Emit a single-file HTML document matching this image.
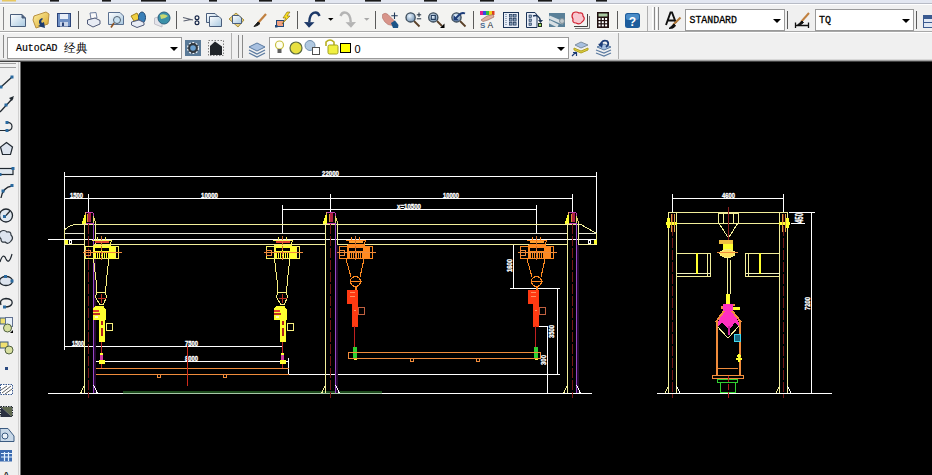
<!DOCTYPE html>
<html><head><meta charset="utf-8">
<style>
html,body{margin:0;padding:0;width:932px;height:475px;overflow:hidden;background:#f0f0f0;font-family:"Liberation Sans",sans-serif;}
#root{position:relative;width:932px;height:475px;}
svg{position:absolute;left:0;top:0;}
</style></head><body><div id="root">
<svg width="932" height="475" viewBox="0 0 932 475">
<!-- ===== toolbar chrome ===== -->
<rect x="0" y="0" width="932" height="62" fill="#f0f0f0"/>
<rect x="0" y="0" width="932" height="3" fill="#e3e7f1"/>
<rect x="2" y="0" width="14" height="1.5" fill="#e8c860"/>
<rect x="50" y="0" width="9" height="1.6" fill="#1a1a1a"/>
<rect x="102" y="0" width="9" height="1.6" fill="#1a1a1a"/>
<rect x="141" y="0" width="25" height="1.6" fill="#1a1a1a"/>
<rect x="209" y="0" width="8" height="1.6" fill="#1a1a1a"/>
<rect x="259" y="0" width="13" height="1.6" fill="#1a1a1a"/>
<rect x="315" y="0" width="10" height="1.6" fill="#1a1a1a"/>
<rect x="365" y="0" width="16" height="1.6" fill="#1a1a1a"/>
<rect x="424" y="0" width="13" height="1.6" fill="#1a1a1a"/>
<rect x="480" y="0" width="14" height="1.6" fill="#1a1a1a"/>
<rect x="538" y="0" width="14" height="1.6" fill="#1a1a1a"/>
<rect x="596" y="0" width="11" height="1.6" fill="#1a1a1a"/>
<line x1="0" y1="3.5" x2="932" y2="3.5" stroke="#b8bcc6"/>
<line x1="0" y1="4.5" x2="932" y2="4.5" stroke="#ffffff"/>
<!-- row1 toolbar -->
<rect x="0" y="5" width="648" height="26" fill="#f3f3f1"/>
<line x1="0" y1="31.5" x2="932" y2="31.5" stroke="#a8a8a8"/>
<line x1="647.5" y1="6" x2="647.5" y2="31" stroke="#b0b0b0"/>
<line x1="3.5" y1="7" x2="3.5" y2="30" stroke="#8a8a8a"/>
<!-- row2 -->
<line x1="0" y1="32.5" x2="932" y2="32.5" stroke="#ffffff"/>
<rect x="0" y="33" width="932" height="26" fill="#f0f0f0"/>
<line x1="231.5" y1="33" x2="231.5" y2="59" stroke="#b0b0b0"/>
<line x1="618.5" y1="33" x2="618.5" y2="59" stroke="#b0b0b0"/>
<line x1="3.5" y1="35" x2="3.5" y2="58" stroke="#8a8a8a"/>
<line x1="0" y1="59.5" x2="932" y2="59.5" stroke="#d8d8d8"/>
<line x1="0" y1="60.5" x2="932" y2="60.5" stroke="#a0a0a0"/>
<line x1="0" y1="61.5" x2="932" y2="61.5" stroke="#404040"/>
<!-- combos -->
<rect x="7.5" y="37.5" width="174" height="21" fill="#fff" stroke="#9a9a9a"/>
<rect x="269.5" y="37.5" width="299" height="21" fill="#fff" stroke="#9a9a9a"/>
<rect x="685.5" y="9.5" width="99" height="21" fill="#fff" stroke="#9a9a9a"/>
<rect x="815.5" y="9.5" width="98" height="21" fill="#fff" stroke="#9a9a9a"/>
<!-- ===== left toolbar ===== -->
<rect x="0" y="62" width="21" height="413" fill="#f0f0f0"/>
<line x1="0" y1="63.5" x2="16" y2="63.5" stroke="#a0a0a0"/>
<line x1="0" y1="67.5" x2="16" y2="67.5" stroke="#a0a0a0"/>
<line x1="18.5" y1="62" x2="18.5" y2="475" stroke="#d0d0d0"/>
<line x1="20.5" y1="62" x2="20.5" y2="475" stroke="#707070"/>
<!--ICONS-->
<line x1="78.5" y1="11" x2="78.5" y2="29" stroke="#5a5a5a"/>
<line x1="176.5" y1="11" x2="176.5" y2="29" stroke="#5a5a5a"/>
<line x1="297.5" y1="11" x2="297.5" y2="29" stroke="#5a5a5a"/>
<line x1="375.5" y1="11" x2="375.5" y2="29" stroke="#5a5a5a"/>
<line x1="473.5" y1="11" x2="473.5" y2="29" stroke="#5a5a5a"/>
<line x1="617.5" y1="11" x2="617.5" y2="29" stroke="#5a5a5a"/>
<line x1="787.5" y1="11" x2="787.5" y2="29" stroke="#5a5a5a"/>
<line x1="916.5" y1="11" x2="916.5" y2="29" stroke="#5a5a5a"/>
<line x1="652.5" y1="7" x2="652.5" y2="30" stroke="#ffffff"/>
<line x1="654.5" y1="7" x2="654.5" y2="30" stroke="#8a8a8a"/>
<line x1="656.5" y1="7" x2="656.5" y2="30" stroke="#ffffff"/>
<line x1="658.5" y1="7" x2="658.5" y2="30" stroke="#8a8a8a"/>
<defs><linearGradient id="pg" x1="0" y1="0" x2="1" y2="1"><stop offset="0" stop-color="#ffffff"/><stop offset="1" stop-color="#a8c8e0"/></linearGradient><linearGradient id="yg" x1="0" y1="0" x2="1" y2="1"><stop offset="0" stop-color="#fff0a0"/><stop offset="1" stop-color="#d8a830"/></linearGradient><radialGradient id="bg1" cx="0.4" cy="0.35" r="0.7"><stop offset="0" stop-color="#e8f4ff"/><stop offset="1" stop-color="#7090b0"/></radialGradient></defs>
<path d="M10.5 14.5 H22 L25.5 18 V26.5 H10.5 Z" fill="url(#pg)" stroke="#4a5e7c"/>
<path d="M22 14.5 V18 H25.5" fill="#4a5e7c" stroke="#4a5e7c"/>
<path d="M34 16 L46 12 L49 14 L48 24 L36 28 L33 20 Z" fill="url(#yg)" stroke="#b89040"/>
<path d="M42 18 Q37 20 40 25 L38 26 L45 28 L44 22 L42 23 Q40 21 43 19 Z" fill="#1c3c70"/>
<rect x="57.5" y="13.5" width="13" height="13" fill="#6f90c4" stroke="#2c4478"/>
<rect x="60" y="14" width="8" height="5" fill="#e8eef8"/>
<rect x="60" y="22" width="8" height="4.5" fill="#c8d4e8"/><rect x="62" y="22.5" width="2" height="3.5" fill="#2c4478"/>
<path d="M90 13 L96 12.5 L97 18 L91 19 Z" fill="#fafafa" stroke="#7080a0"/>
<path d="M87.5 20 L95 18 L100 20.5 L100 24 L93 27 L87.5 24 Z" fill="#e8ecf4" stroke="#505a78"/>
<path d="M108.5 12.5 H120 L123.5 16 V24.5 H108.5 Z" fill="url(#pg)" stroke="#5a7090"/>
<circle cx="117" cy="20" r="3.5" fill="#c8e0f0" stroke="#506070"/>
<line x1="114" y1="23" x2="111" y2="27.5" stroke="#8a5020" stroke-width="1.6"/>
<path d="M131 16 L137 13 L140 19 L134 21 Z" fill="#f0d040" stroke="#a08020"/>
<ellipse cx="142" cy="17.5" rx="3.5" ry="5.5" fill="#3a80b8" stroke="#204870"/>
<path d="M131.5 22 L139 20 L144 22.5 L144 25 L137 27.5 L131.5 25 Z" fill="#e8ecf4" stroke="#505a78"/>
<path d="M154.5 18 L162 16 L162 27 L154.5 24 Z" fill="#e4e4ea" stroke="#c0c0c8"/>
<circle cx="164" cy="18" r="6" fill="#3a90a8" stroke="#2a6080"/>
<path d="M160 15 Q164 13 168 16 Q165 19 161 19 Z" fill="#c8d870"/>
<path d="M183 17.5 L193 20 M183.5 21 L191 19.5" stroke="#5a6070" stroke-width="1.1" fill="none"/>
<circle cx="197" cy="17.8" r="1.9" fill="none" stroke="#18284a" stroke-width="1.2"/><circle cx="197" cy="22.8" r="1.9" fill="none" stroke="#18284a" stroke-width="1.2"/>
<path d="M206.5 13.5 H215 L217.5 16 V22.5 H206.5 Z" fill="url(#pg)" stroke="#4a5e7c"/>
<path d="M209.5 16.5 H219 L221.5 19 V26.5 H209.5 Z" fill="url(#pg)" stroke="#4a5e7c"/>
<path d="M229 19 L236 13 L244 20 L238 27 Z" fill="#e8d080" stroke="#a89040"/>
<path d="M232.5 15.5 H239 L241.5 18 V23.5 H232.5 Z" fill="url(#pg)" stroke="#4a5e7c"/>
<path d="M266 14 L258 23" stroke="#c08040" stroke-width="2.2"/>
<path d="M258 22 L254 26.5 L257.5 25.5 L260 23.5 Z" fill="#1a1a1a" stroke="#1a1a1a"/>
<rect x="276.5" y="20.5" width="7" height="6" fill="#f0a080" stroke="#204878"/>
<rect x="275" y="25" width="2.5" height="2.5" fill="#204878"/>
<path d="M287 12 L283 18 L286 18 L282 24 L290 16 L287 16 L290 12 Z" fill="#f8e020" stroke="#806010" stroke-width="0.6"/>
<path d="M319.5 16 Q318 11.5 313.5 12.8 Q309.5 14.5 309.3 22" stroke="#1c3868" stroke-width="2.4" fill="none"/>
<path d="M304 22 L314.5 22.3 L309 27.8 Z" fill="#1c3868"/>
<path d="M328 18 H333.5 L330.7 20.8 Z" fill="#000"/>
<path d="M340.5 16 Q342 11.5 346.5 12.8 Q350.5 14.5 350.7 22" stroke="#b4b4b4" stroke-width="2.4" fill="none"/>
<path d="M356 22 L345.5 22.3 L351 27.8 Z" fill="#b4b4b4"/>
<path d="M364 18 H369.5 L366.7 20.8 Z" fill="#a8a8a8"/>
<path d="M382.5 14.5 Q385 12 388 14.5 L394.5 21 L392.5 25.5 L388 24.5 Q384 22 382.5 18 Z" fill="#d8948a" stroke="#b07068" stroke-width="0.6"/>
<path d="M391 23 L395 20.5 L398.5 25 L398 28 L393 28 Z" fill="#1c5488"/>
<path d="M394.5 12.5 V19 M391.3 15.7 H397.7" stroke="#203858" stroke-width="1.1"/>
<line x1="414" y1="21" x2="419.5" y2="26.5" stroke="#5a4028" stroke-width="1.8"/>
<circle cx="410.6" cy="17.4" r="4.6" fill="url(#bg1)" stroke="#3a4a58" stroke-width="1.3"/>
<path d="M419 12.5 V17 M416.8 14.8 H421.2 M416.8 18.8 H421.2" stroke="#203040" stroke-width="1"/>
<line x1="437" y1="21" x2="442" y2="26" stroke="#5a4028" stroke-width="1.8"/>
<circle cx="433.3" cy="17.4" r="4.6" fill="url(#bg1)" stroke="#3a4a58" stroke-width="1.3"/>
<rect x="431.3" y="15.4" width="4" height="4" fill="none" stroke="#203858" stroke-width="1.1"/>
<path d="M440 28 L444.5 28 L444.5 23.5 Z" fill="#000"/>
<line x1="460" y1="21" x2="465.5" y2="26.5" stroke="#5a4028" stroke-width="1.8"/>
<circle cx="456.5" cy="17.4" r="4.6" fill="url(#bg1)" stroke="#3a4a58" stroke-width="1.3"/>
<path d="M455 19 L459 15 Q462 12 465 13.5" stroke="#1c3c78" stroke-width="1.8" fill="none"/><path d="M453.5 15 L453.5 20.5 L459 20.5 Z" fill="#1c3c78"/>
<rect x="480" y="11" width="3" height="4" fill="#e02090"/><rect x="483" y="11" width="3" height="4" fill="#3050e0"/><rect x="486" y="11" width="3" height="4" fill="#30c040"/><rect x="489" y="11" width="3" height="4" fill="#f0d020"/><rect x="492" y="11" width="2.5" height="4" fill="#e04020"/>
<path d="M481 20 L487 16 L493 14.5 L494 17 L488 20 L483 21.5 Z" fill="#e0b0a0" stroke="#906050" stroke-width="0.6"/>
<text x="480" y="27.5" font-family="Liberation Sans" font-weight="bold" font-size="8" fill="#4a6a90">S</text><text x="487.5" y="27.5" font-family="Liberation Sans" font-size="8.5" fill="#202830">A</text>
<rect x="503.5" y="12.5" width="15" height="15" fill="#e8eef8" stroke="#1c3458"/>
<rect x="509.5" y="14.5" width="2.6" height="2.6" fill="#8aa0b8" stroke="#1c3458" stroke-width="0.7"/>
<rect x="509.5" y="18.5" width="2.6" height="2.6" fill="#8aa0b8" stroke="#1c3458" stroke-width="0.7"/>
<rect x="509.5" y="22.5" width="2.6" height="2.6" fill="#8aa0b8" stroke="#1c3458" stroke-width="0.7"/>
<rect x="513.5" y="14.5" width="2.6" height="2.6" fill="#8aa0b8" stroke="#1c3458" stroke-width="0.7"/>
<rect x="513.5" y="18.5" width="2.6" height="2.6" fill="#8aa0b8" stroke="#1c3458" stroke-width="0.7"/>
<rect x="513.5" y="22.5" width="2.6" height="2.6" fill="#8aa0b8" stroke="#1c3458" stroke-width="0.7"/>
<line x1="506" y1="14" x2="506" y2="26" stroke="#506880" stroke-dasharray="1 1"/>
<path d="M526.5 12.5 H535 L537 15 V27.5 H526.5 Z" fill="#e8eef8" stroke="#1c3458"/>
<rect x="529" y="15" width="2.5" height="2.5" fill="#8aa0b8" stroke="#1c3458" stroke-width="0.6"/><rect x="529" y="19" width="2.5" height="2.5" fill="#8aa0b8" stroke="#1c3458" stroke-width="0.6"/><rect x="529" y="23" width="2.5" height="2.5" fill="#8aa0b8" stroke="#1c3458" stroke-width="0.6"/>
<path d="M533 16 Q539 14 540.5 21" stroke="#1c3458" stroke-width="1.5" fill="none"/><path d="M538 20 L543 20 L540.5 23 Z" fill="#1c3458"/>
<rect x="538.5" y="23.5" width="3" height="3" fill="#a0e060" stroke="#203020"/>
<rect x="549" y="13" width="16" height="14" fill="#5a8098"/>
<path d="M549 17 L563 23 M549 21.5 L558 26" stroke="#d8e0e4" stroke-width="3.2"/>
<circle cx="562" cy="21" r="2.5" fill="#c0c8cc" stroke="#809098"/>
<path d="M573 13 Q576 11 579 13 Q583 12 583 16 Q586 19 582 22 Q580 25 576 23 Q572 23 573 19 Q571 16 573 13 Z" fill="#f8c8d0" stroke="#d02030" stroke-width="1.2"/>
<path d="M574 26.5 H587.5 V14" stroke="#404040" fill="none"/><path d="M575 28.5 H589.5 V16" stroke="#808080" fill="none"/>
<rect x="597" y="12" width="12" height="16" fill="#201010"/>
<rect x="598.5" y="13.5" width="9" height="3" fill="#a8c8a0"/>
<rect x="598.5" y="18.0" width="2" height="2" fill="#ffffff"/>
<rect x="598.5" y="21.2" width="2" height="2" fill="#ffffff"/>
<rect x="598.5" y="24.4" width="2" height="2" fill="#ffffff"/>
<rect x="601.8" y="18.0" width="2" height="2" fill="#ffffff"/>
<rect x="601.8" y="21.2" width="2" height="2" fill="#ffffff"/>
<rect x="601.8" y="24.4" width="2" height="2" fill="#ffffff"/>
<rect x="605.1" y="18.0" width="2" height="2" fill="#ffffff"/>
<rect x="605.1" y="21.2" width="2" height="2" fill="#ffffff"/>
<rect x="605.1" y="24.4" width="2" height="2" fill="#ffffff"/>
<rect x="625" y="13" width="15" height="15" rx="2.5" fill="#1c5c9c"/>
<rect x="626" y="14" width="13" height="6" rx="2" fill="#4a8cc8"/>
<text x="632.5" y="25.5" text-anchor="middle" font-family="Liberation Sans" font-weight="bold" font-size="12" fill="#fff">?</text>
<path d="M666 25 L670.5 12.5 L672 12.5 L676 23 M667.5 20.5 H674.5" stroke="#101010" stroke-width="1.9" fill="none"/>
<path d="M680.5 17.5 L673 25" stroke="#b07838" stroke-width="2"/><path d="M674 24 L669 28.5 L673 28 L675.5 26 Z" fill="#101010" stroke="#101010"/>
<text x="689.5" y="23" font-family="Liberation Mono" font-size="11" fill="#000" stroke="#000" stroke-width="0.3" textLength="47.5" lengthAdjust="spacingAndGlyphs">STANDARD</text>
<path d="M773 19 H781 L777 23 Z" fill="#000"/>
<path d="M795 25.5 H809 M795.5 22.5 V28 M808.5 22.5 V28" stroke="#101010" stroke-width="1.3" fill="none"/>
<path d="M809 13 L801 22" stroke="#c08040" stroke-width="2"/><path d="M802 21 L797.5 25 L801 24.5 L803.5 22.5 Z" fill="#101010" stroke="#101010"/>
<text x="819" y="23" font-family="Liberation Mono" font-size="11" fill="#000" stroke="#000" stroke-width="0.3" textLength="12" lengthAdjust="spacingAndGlyphs">TQ</text>
<path d="M902 19 H910 L906 23 Z" fill="#000"/>
<rect x="923.5" y="15.5" width="10" height="12" fill="#e0e8f4" stroke="#3a5a90"/><rect x="924" y="16" width="10" height="3" fill="#3a5a90"/><line x1="923.5" y1="22.5" x2="932" y2="22.5" stroke="#3a5a90"/>
<line x1="238.5" y1="35" x2="238.5" y2="58" stroke="#8a8a8a"/><line x1="242.5" y1="35" x2="242.5" y2="58" stroke="#8a8a8a"/>
<text x="16" y="51" font-family="Liberation Mono" font-size="11" fill="#000" stroke="#000" stroke-width="0.2" textLength="41.5" lengthAdjust="spacingAndGlyphs">AutoCAD</text>
<text x="64" y="52" font-family="Liberation Sans" font-size="11.5" fill="#000" textLength="23" lengthAdjust="spacingAndGlyphs">经典</text>
<path d="M170 47 H178 L174 51 Z" fill="#000"/>
<rect x="185" y="40" width="16" height="16" fill="#5a7a98"/>
<circle cx="193" cy="48" r="5.5" fill="#303840" stroke="#e8eef4" stroke-width="1.2" stroke-dasharray="2 1.5"/>
<circle cx="193" cy="48" r="2.8" fill="#6aa0d0"/>
<rect x="208.5" y="40.5" width="15" height="15" fill="none" stroke="#808080" stroke-dasharray="1.5 1.5"/>
<path d="M210 46 L215 41.5 L222 46.5 V55 H210 Z" fill="#202428"/>
<path d="M249 47 L257 43 L265 47 L257 51 Z" fill="#a8c0e0" stroke="#5a7aa0"/>
<path d="M249 50 L257 54 L265 50 M249 53 L257 57 L265 53" stroke="#5a7aa0" stroke-width="1.2" fill="none"/>
<circle cx="279.5" cy="45" r="4" fill="#fffff0" stroke="#c8c040" stroke-width="1.2"/>
<rect x="277.5" y="49" width="4" height="4" fill="#606060"/>
<circle cx="296" cy="48" r="6" fill="#e8e040" stroke="#5a6a40" stroke-width="1.2"/>
<circle cx="310" cy="45.5" r="5" fill="#b0c8e0" stroke="#7090b0"/>
<rect x="312.5" y="47.5" width="7" height="7" fill="#fff" stroke="#505050"/>
<path d="M326 46 V42 Q330 38 334 42 V45" stroke="#b8b020" stroke-width="1.6" fill="none"/>
<rect x="328" y="45" width="10" height="9" rx="1.5" fill="#f0f040" stroke="#a0a020"/>
<rect x="340.5" y="43.5" width="10" height="9" fill="#ffff00" stroke="#000"/>
<text x="354.5" y="52.5" font-family="Liberation Sans" font-size="11" fill="#000">0</text>
<path d="M557 47 H565 L561 51 Z" fill="#000"/>
<path d="M575 45 L581 42 L588 45 L581 48 Z" fill="#a8c0e0" stroke="#8090a0"/>
<path d="M574 48 L581 51 L588 48 L588 50 L581 53 L574 50 Z" fill="#e0d040" stroke="#b0a020"/>
<path d="M572 56 L576 52 M573 52.5 H576.5 V56" stroke="#1c3c78" stroke-width="1.2" fill="none"/>
<path d="M596 50 L604 53 L611 50 M596 53 L604 56 L611 53" stroke="#5a7aa0" stroke-width="1.2" fill="none"/>
<path d="M597 47 L604 44 L611 47 L604 50 Z" fill="#a8c0e0" stroke="#5a7aa0"/>
<path d="M600 46 Q602 39 607 41 Q610 44 606 47" stroke="#1c3c78" stroke-width="1.8" fill="none"/>
<path d="M598 44 L602 48 L603 43 Z" fill="#1c3c78"/>
<line x1="1" y1="87" x2="12" y2="77" stroke="#202830" stroke-width="1.3"/>
<rect x="-0.5" y="85.5" width="3" height="3" fill="#2a6aa0"/>
<rect x="10.5" y="75.5" width="3" height="3" fill="#2a6aa0"/>
<line x1="0" y1="112" x2="13" y2="98" stroke="#202830" stroke-width="1.3"/><path d="M14 96 L9 98 L12 101 Z" fill="#202830"/>
<rect x="4.5" y="103.5" width="3" height="3" fill="#2a6aa0"/>
<path d="M0 130.5 H6 M6 122.5 Q12 122 12 126.5 Q12 131 6 130.5" stroke="#202830" stroke-width="1.2" fill="none"/>
<rect x="5.5" y="121.0" width="3" height="3" fill="#2a6aa0"/>
<rect x="5.5" y="129.0" width="3" height="3" fill="#2a6aa0"/>
<path d="M6.5 142.5 L12.5 147 L10.5 154.5 H2.5 L0.5 147 Z" fill="#dde4ee" stroke="#202830" stroke-width="1.2"/>
<rect x="-1" y="168.5" width="14" height="6" fill="#e0e8f0" stroke="#202830" stroke-width="1.2"/>
<rect x="11.5" y="167.0" width="3" height="3" fill="#2a6aa0"/>
<rect x="-1.5" y="173.0" width="3" height="3" fill="#2a6aa0"/>
<path d="M1 198 Q3 187 12 186" stroke="#202830" stroke-width="1.3" fill="none"/>
<rect x="10.5" y="184.0" width="3" height="3" fill="#2a6aa0"/>
<rect x="1.5" y="189.5" width="3" height="3" fill="#2a6aa0"/>
<circle cx="6" cy="215.5" r="6.5" fill="#e0e8f0" stroke="#202830" stroke-width="1.3"/><line x1="6" y1="215.5" x2="10" y2="211" stroke="#202830" stroke-width="1.2"/>
<rect x="3.0" y="215.0" width="3" height="3" fill="#2a6aa0"/>
<path d="M0 232 Q4 229 7 232 Q11 231 11 235 Q14 238 11 241 Q8 245 5 242 Q1 243 1 239 Q-2 236 0 232 Z" fill="#dde4ee" stroke="#303840" stroke-width="1.2"/>
<path d="M0 262 Q3 252 6 259 Q9 265 12 254" stroke="#202830" stroke-width="1.2" fill="none"/>
<ellipse cx="6" cy="281" rx="6.5" ry="4.5" fill="#dde4ee" stroke="#202830" stroke-width="1.3"/>
<rect x="4.0" y="275.0" width="3" height="3" fill="#2a6aa0"/>
<rect x="10.5" y="279.5" width="3" height="3" fill="#2a6aa0"/>
<path d="M1 305 Q-1 299 6 298.5 Q13 299 12 303.5 Q11 307 5 307" stroke="#202830" stroke-width="1.3" fill="none"/>
<rect x="3.0" y="305.5" width="3" height="3" fill="#2a6aa0"/>
<rect x="0" y="318" width="8" height="6" fill="#f0e070" stroke="#3a5a80"/><rect x="5.5" y="317.5" width="7" height="9" fill="#e8f0f8" stroke="#607090"/><circle cx="7.5" cy="328" r="4" fill="#d8e0a0" stroke="#506040"/><path d="M10 333 L13 333 L13 330 Z" fill="#000"/>
<rect x="0" y="342" width="8" height="6" fill="#f0e070" stroke="#3a5a80"/><circle cx="9" cy="350" r="4" fill="#d8e0a0" stroke="#506040"/>
<rect x="5" y="367" width="3" height="3" fill="#2a4a80"/>
<rect x="0.5" y="384.5" width="12" height="10" fill="#fff" stroke="#3a5a90" stroke-dasharray="1.5 1"/><path d="M2 393 L11 386 M5 394 L12 389 M1 390 L7 386" stroke="#606060"/>
<rect x="0.5" y="406.5" width="12" height="10" fill="none" stroke="#202830" stroke-dasharray="1.5 1"/><path d="M1 407 H12 V417 Z" fill="#606a50"/><path d="M1 407 L12 417 H1 Z" fill="#2a3040"/>
<path d="M0 428.5 H8 L14 436 V441.5 H0 Z" fill="#c8d8e8" stroke="#3a5a80"/><circle cx="5" cy="436" r="3" fill="#e8f0f8" stroke="#3a5a80"/>
<rect x="0" y="450" width="12" height="11.5" fill="#3a6ab0"/><path d="M1 453.5 H12 M1 457 H12 M4.5 452 V461 M8.5 452 V461" stroke="#e0f0ff" stroke-width="1.2"/>
<text x="3" y="478" font-family="Liberation Sans" font-size="9" font-weight="bold" fill="#202020">A</text>

<!--/ICONS-->
<!-- ===== canvas ===== -->
<rect x="21" y="62" width="911" height="413" fill="#000"/>
<g id="drawing" fill="none" stroke-width="1" shape-rendering="crispEdges">
<!--DRAW-->
<line x1="64.5" y1="172" x2="64.5" y2="350" stroke="#ffffff" stroke-width="1" />
<line x1="64.5" y1="176.5" x2="597" y2="176.5" stroke="#ffffff" stroke-width="1" />
<line x1="596.5" y1="172" x2="596.5" y2="233" stroke="#ffffff" stroke-width="1" />
<text x="322" y="176" fill="#ffffff" stroke="#ffffff" stroke-width="0.35" font-family="Liberation Sans, sans-serif" font-weight="bold" font-size="8" textLength="17" lengthAdjust="spacingAndGlyphs">22000</text>
<line x1="64.5" y1="198.5" x2="572.5" y2="198.5" stroke="#ffffff" stroke-width="1" />
<line x1="88.5" y1="194" x2="88.5" y2="212" stroke="#ffffff" stroke-width="1" />
<line x1="330.5" y1="194" x2="330.5" y2="212" stroke="#ffffff" stroke-width="1" />
<line x1="572.5" y1="194" x2="572.5" y2="212" stroke="#ffffff" stroke-width="1" />
<text x="70" y="198" fill="#ffffff" stroke="#ffffff" stroke-width="0.35" font-family="Liberation Sans, sans-serif" font-weight="bold" font-size="8" textLength="13" lengthAdjust="spacingAndGlyphs">1500</text>
<text x="201" y="198" fill="#ffffff" stroke="#ffffff" stroke-width="0.35" font-family="Liberation Sans, sans-serif" font-weight="bold" font-size="8" textLength="17" lengthAdjust="spacingAndGlyphs">10000</text>
<text x="443" y="198" fill="#ffffff" stroke="#ffffff" stroke-width="0.35" font-family="Liberation Sans, sans-serif" font-weight="bold" font-size="8" textLength="16" lengthAdjust="spacingAndGlyphs">10000</text>
<line x1="282.5" y1="209.5" x2="536.5" y2="209.5" stroke="#ffffff" stroke-width="1" />
<line x1="282.5" y1="205" x2="282.5" y2="234" stroke="#ffffff" stroke-width="1" />
<line x1="536.5" y1="205" x2="536.5" y2="234" stroke="#ffffff" stroke-width="1" />
<text x="397" y="209" fill="#ffffff" stroke="#ffffff" stroke-width="0.35" font-family="Liberation Sans, sans-serif" font-weight="bold" font-size="8" textLength="24" lengthAdjust="spacingAndGlyphs">x=10500</text>
<line x1="64.5" y1="346.5" x2="282.5" y2="346.5" stroke="#ffffff" stroke-width="1" />
<text x="72" y="346" fill="#ffffff" stroke="#ffffff" stroke-width="0.35" font-family="Liberation Sans, sans-serif" font-weight="bold" font-size="8" textLength="12" lengthAdjust="spacingAndGlyphs">1500</text>
<text x="185" y="346" fill="#ffffff" stroke="#ffffff" stroke-width="0.35" font-family="Liberation Sans, sans-serif" font-weight="bold" font-size="8" textLength="13" lengthAdjust="spacingAndGlyphs">7500</text>
<line x1="282.5" y1="340" x2="282.5" y2="350" stroke="#ffffff" stroke-width="1" />
<line x1="95.5" y1="358" x2="95.5" y2="375" stroke="#ffffff" stroke-width="1" />
<line x1="95.5" y1="361.5" x2="288.5" y2="361.5" stroke="#ffffff" stroke-width="1" />
<line x1="288.5" y1="358" x2="288.5" y2="375" stroke="#ffffff" stroke-width="1" />
<text x="185" y="361" fill="#ffffff" stroke="#ffffff" stroke-width="0.35" font-family="Liberation Sans, sans-serif" font-weight="bold" font-size="8" textLength="13" lengthAdjust="spacingAndGlyphs">8000</text>
<line x1="288.5" y1="374.5" x2="560" y2="374.5" stroke="#ffffff" stroke-width="1" />
<line x1="48" y1="393.5" x2="123" y2="393.5" stroke="#ffffff" stroke-width="1" />
<line x1="123" y1="393.5" x2="382" y2="393.5" stroke="#a8c8a8" stroke-width="1" />
<line x1="123" y1="392.0" x2="382" y2="392.0" stroke="#1c4a1c" stroke-width="2" />
<line x1="382" y1="393.5" x2="592" y2="393.5" stroke="#ffffff" stroke-width="1" />
<line x1="513.5" y1="245" x2="513.5" y2="288" stroke="#ffffff" stroke-width="1" />
<line x1="510" y1="288.5" x2="560" y2="288.5" stroke="#ffffff" stroke-width="1" />
<text x="512" y="272" fill="#ffffff" stroke="#ffffff" stroke-width="0.35" font-family="Liberation Sans, sans-serif" font-weight="bold" font-size="8" textLength="13" lengthAdjust="spacingAndGlyphs" transform="rotate(-90 512 272)">1600</text>
<line x1="557.5" y1="288" x2="557.5" y2="374" stroke="#ffffff" stroke-width="1" />
<text x="554" y="338" fill="#ffffff" stroke="#ffffff" stroke-width="0.35" font-family="Liberation Sans, sans-serif" font-weight="bold" font-size="8" textLength="13" lengthAdjust="spacingAndGlyphs" transform="rotate(-90 554 338)">3500</text>
<line x1="535" y1="326.5" x2="548" y2="326.5" stroke="#ffffff" stroke-width="1" />
<line x1="547.5" y1="326" x2="547.5" y2="393" stroke="#ffffff" stroke-width="1" />
<text x="546" y="365" fill="#ffffff" stroke="#ffffff" stroke-width="0.35" font-family="Liberation Sans, sans-serif" font-weight="bold" font-size="8" textLength="10" lengthAdjust="spacingAndGlyphs" transform="rotate(-90 546 365)">300</text>
<polyline points="64.5,246 64.5,230 68,227 74,224.5 581,224.5 595.5,233" stroke="#f2ee9a" stroke-width="1" fill="none"/>
<line x1="64.5" y1="233.5" x2="84.5" y2="233.5" stroke="#e8e8d8" stroke-width="1" />
<line x1="95" y1="233.5" x2="325.5" y2="233.5" stroke="#e8e8d8" stroke-width="1" />
<line x1="337" y1="233.5" x2="567.5" y2="233.5" stroke="#e8e8d8" stroke-width="1" />
<line x1="578" y1="233.5" x2="596.5" y2="233.5" stroke="#e8e8d8" stroke-width="1" />
<line x1="48" y1="239.5" x2="597" y2="239.5" stroke="#ffffff" stroke-width="1" />
<line x1="64.5" y1="244.5" x2="84.5" y2="244.5" stroke="#f2ee9a" stroke-width="1" />
<line x1="95" y1="244.5" x2="325.5" y2="244.5" stroke="#f2ee9a" stroke-width="1" />
<line x1="337" y1="244.5" x2="567.5" y2="244.5" stroke="#f2ee9a" stroke-width="1" />
<line x1="578" y1="244.5" x2="597" y2="244.5" stroke="#f2ee9a" stroke-width="1" />
<line x1="596.5" y1="233" x2="596.5" y2="245" stroke="#f2ee9a" stroke-width="1" />
<rect x="65" y="240" width="3" height="4" fill="#ffff30" stroke="none"/>
<rect x="69.5" y="240.5" width="2" height="3" stroke="#ffffff" fill="none" stroke-width="1"/>
<rect x="594" y="240" width="3" height="4" fill="#ffff30" stroke="none"/>
<rect x="588.5" y="240.5" width="2" height="3" stroke="#ffffff" fill="none" stroke-width="1"/>
<line x1="88.5" y1="224" x2="88.5" y2="398" stroke="#781818" stroke-width="1.6" stroke-dasharray="10 2"/>
<polygon points="85.0,223 86.0,212.5 93.0,212.5 93.5,223" stroke="#c040b0" stroke-width="1" fill="none"/>
<line x1="85.5" y1="212.5" x2="85.0" y2="223" stroke="#e8b060" stroke-width="1" />
<rect x="88.0" y="213" width="2.5" height="9" fill="#b02040" stroke="none"/>
<rect x="86.5" y="214" width="1" height="8" fill="#e09030" stroke="none"/>
<polyline points="82.0,224 85.0,215 85.0,224" stroke="#ffff30" stroke-width="1" fill="#ffff30"/>
<polyline points="96.0,224 93.5,216 93.5,224" stroke="#e8d870" stroke-width="1" fill="none"/>
<line x1="84.5" y1="223" x2="84.5" y2="393" stroke="#f2ee9a" stroke-width="1" />
<line x1="93.5" y1="223" x2="93.5" y2="393" stroke="#9848c8" stroke-width="1" />
<line x1="95.0" y1="245" x2="95.0" y2="393" stroke="#240830" stroke-width="2" />
<line x1="95.0" y1="223" x2="95.0" y2="245" stroke="#f2ee9a" stroke-width="1" />
<line x1="84.5" y1="385" x2="80.5" y2="393.5" stroke="#f2ee9a" stroke-width="1" />
<line x1="93.5" y1="385" x2="97.5" y2="393.5" stroke="#ffffff" stroke-width="1" />
<line x1="330.5" y1="224" x2="330.5" y2="398" stroke="#781818" stroke-width="1.6" stroke-dasharray="10 2"/>
<polygon points="326.0,223 327.0,212.5 335.0,212.5 335.5,223" stroke="#c040b0" stroke-width="1" fill="none"/>
<line x1="326.5" y1="212.5" x2="326.0" y2="223" stroke="#e8b060" stroke-width="1" />
<rect x="330.0" y="213" width="2.5" height="9" fill="#b02040" stroke="none"/>
<rect x="328.5" y="214" width="1" height="8" fill="#e09030" stroke="none"/>
<polyline points="323.0,224 326.0,215 326.0,224" stroke="#ffff30" stroke-width="1" fill="#ffff30"/>
<polyline points="338.0,224 335.5,216 335.5,224" stroke="#e8d870" stroke-width="1" fill="none"/>
<line x1="325.5" y1="223" x2="325.5" y2="393" stroke="#f2ee9a" stroke-width="1" />
<line x1="335.5" y1="223" x2="335.5" y2="393" stroke="#9848c8" stroke-width="1" />
<line x1="337.0" y1="245" x2="337.0" y2="393" stroke="#240830" stroke-width="2" />
<line x1="337.0" y1="223" x2="337.0" y2="245" stroke="#f2ee9a" stroke-width="1" />
<line x1="325.5" y1="385" x2="321.5" y2="393.5" stroke="#f2ee9a" stroke-width="1" />
<line x1="335.5" y1="385" x2="339.5" y2="393.5" stroke="#ffffff" stroke-width="1" />
<line x1="572.5" y1="224" x2="572.5" y2="398" stroke="#781818" stroke-width="1.6" stroke-dasharray="10 2"/>
<polygon points="568.0,223 569.0,212.5 576.0,212.5 576.5,223" stroke="#c040b0" stroke-width="1" fill="none"/>
<line x1="568.5" y1="212.5" x2="568.0" y2="223" stroke="#e8b060" stroke-width="1" />
<rect x="572.0" y="213" width="2.5" height="9" fill="#b02040" stroke="none"/>
<rect x="570.5" y="214" width="1" height="8" fill="#e09030" stroke="none"/>
<polyline points="565.0,224 568.0,215 568.0,224" stroke="#ffff30" stroke-width="1" fill="#ffff30"/>
<polyline points="579.0,224 576.5,216 576.5,224" stroke="#e8d870" stroke-width="1" fill="none"/>
<line x1="567.5" y1="223" x2="567.5" y2="393" stroke="#f2ee9a" stroke-width="1" />
<line x1="576.5" y1="223" x2="576.5" y2="393" stroke="#9848c8" stroke-width="1" />
<line x1="578.0" y1="245" x2="578.0" y2="393" stroke="#240830" stroke-width="2" />
<line x1="578.0" y1="223" x2="578.0" y2="245" stroke="#f2ee9a" stroke-width="1" />
<line x1="567.5" y1="385" x2="563.5" y2="393.5" stroke="#f2ee9a" stroke-width="1" />
<line x1="576.5" y1="385" x2="580.5" y2="393.5" stroke="#ffffff" stroke-width="1" />
<polyline points="91.5,240 112.0,240 110.0,244.5 93.5,244.5" stroke="#f8f060" stroke-width="1" fill="none"/>
<rect x="94.5" y="241" width="14" height="2" fill="#e04030" stroke="none"/>
<line x1="97.5" y1="236.5" x2="97.5" y2="240" stroke="#f8f060" stroke-width="1" />
<line x1="101.5" y1="236.5" x2="101.5" y2="240" stroke="#f8f060" stroke-width="1" />
<line x1="105.5" y1="236.5" x2="105.5" y2="240" stroke="#f8f060" stroke-width="1" />
<rect x="93.5" y="246" width="16.5" height="12.5" fill="#ffff30" stroke="none"/>
<rect x="95.0" y="247.5" width="6" height="3" fill="#000" stroke="none"/>
<rect x="102.0" y="247.5" width="6.5" height="3" fill="#000" stroke="none"/>
<line x1="96.0" y1="251.5" x2="96.0" y2="257.5" stroke="#000" stroke-width="1" />
<line x1="98.0" y1="251.5" x2="98.0" y2="257.5" stroke="#000" stroke-width="1" />
<line x1="100.0" y1="251.5" x2="100.0" y2="257.5" stroke="#000" stroke-width="1" />
<line x1="103.0" y1="251.5" x2="103.0" y2="257.5" stroke="#000" stroke-width="1" />
<line x1="105.0" y1="251.5" x2="105.0" y2="257.5" stroke="#000" stroke-width="1" />
<line x1="107.0" y1="251.5" x2="107.0" y2="257.5" stroke="#000" stroke-width="1" />
<rect x="93.5" y="245.5" width="16.5" height="13" stroke="#f8f060" fill="none" stroke-width="1"/>
<rect x="85.0" y="246.5" width="8.5" height="11.5" stroke="#f8f060" fill="none" stroke-width="1"/>
<rect x="85.0" y="250" width="5" height="5" stroke="#f08c3c" fill="none" stroke-width="1"/>
<rect x="110.0" y="246" width="5" height="12.5" fill="#ffff30" stroke="none"/>
<rect x="115.0" y="246.5" width="3.5" height="11.5" stroke="#f8f060" fill="none" stroke-width="1"/>
<line x1="82.5" y1="252.5" x2="121.5" y2="252.5" stroke="#f08c3c" stroke-width="1" />
<line x1="101.5" y1="236" x2="101.5" y2="261" stroke="#d07030" stroke-width="1" stroke-dasharray="4 1"/>
<polyline points="272.5,240 293.0,240 291.0,244.5 274.5,244.5" stroke="#f8f060" stroke-width="1" fill="none"/>
<rect x="275.5" y="241" width="14" height="2" fill="#e04030" stroke="none"/>
<line x1="278.5" y1="236.5" x2="278.5" y2="240" stroke="#f8f060" stroke-width="1" />
<line x1="282.5" y1="236.5" x2="282.5" y2="240" stroke="#f8f060" stroke-width="1" />
<line x1="286.5" y1="236.5" x2="286.5" y2="240" stroke="#f8f060" stroke-width="1" />
<rect x="274.5" y="246" width="16.5" height="12.5" fill="#ffff30" stroke="none"/>
<rect x="276.0" y="247.5" width="6" height="3" fill="#000" stroke="none"/>
<rect x="283.0" y="247.5" width="6.5" height="3" fill="#000" stroke="none"/>
<line x1="277.0" y1="251.5" x2="277.0" y2="257.5" stroke="#000" stroke-width="1" />
<line x1="279.0" y1="251.5" x2="279.0" y2="257.5" stroke="#000" stroke-width="1" />
<line x1="281.0" y1="251.5" x2="281.0" y2="257.5" stroke="#000" stroke-width="1" />
<line x1="284.0" y1="251.5" x2="284.0" y2="257.5" stroke="#000" stroke-width="1" />
<line x1="286.0" y1="251.5" x2="286.0" y2="257.5" stroke="#000" stroke-width="1" />
<line x1="288.0" y1="251.5" x2="288.0" y2="257.5" stroke="#000" stroke-width="1" />
<rect x="274.5" y="245.5" width="16.5" height="13" stroke="#f8f060" fill="none" stroke-width="1"/>
<rect x="266.0" y="246.5" width="8.5" height="11.5" stroke="#f8f060" fill="none" stroke-width="1"/>
<rect x="266.0" y="250" width="5" height="5" stroke="#f08c3c" fill="none" stroke-width="1"/>
<rect x="291.0" y="246" width="5" height="12.5" fill="#ffff30" stroke="none"/>
<rect x="296.0" y="246.5" width="3.5" height="11.5" stroke="#f8f060" fill="none" stroke-width="1"/>
<line x1="263.5" y1="252.5" x2="302.5" y2="252.5" stroke="#f08c3c" stroke-width="1" />
<line x1="282.5" y1="236" x2="282.5" y2="261" stroke="#d07030" stroke-width="1" stroke-dasharray="4 1"/>
<polyline points="345.5,240 366.0,240 364.0,244.5 347.5,244.5" stroke="#ff8a20" stroke-width="1" fill="none"/>
<rect x="348.5" y="241" width="14" height="2" fill="#ffa030" stroke="none"/>
<line x1="351.5" y1="236.5" x2="351.5" y2="240" stroke="#ff8a20" stroke-width="1" />
<line x1="355.5" y1="236.5" x2="355.5" y2="240" stroke="#ff8a20" stroke-width="1" />
<line x1="359.5" y1="236.5" x2="359.5" y2="240" stroke="#ff8a20" stroke-width="1" />
<rect x="347.5" y="246" width="16.5" height="12.5" fill="#ff8a20" stroke="none"/>
<rect x="349.0" y="247.5" width="6" height="3" fill="#000" stroke="none"/>
<rect x="356.0" y="247.5" width="6.5" height="3" fill="#000" stroke="none"/>
<line x1="350.0" y1="251.5" x2="350.0" y2="257.5" stroke="#000" stroke-width="1" />
<line x1="352.0" y1="251.5" x2="352.0" y2="257.5" stroke="#000" stroke-width="1" />
<line x1="354.0" y1="251.5" x2="354.0" y2="257.5" stroke="#000" stroke-width="1" />
<line x1="357.0" y1="251.5" x2="357.0" y2="257.5" stroke="#000" stroke-width="1" />
<line x1="359.0" y1="251.5" x2="359.0" y2="257.5" stroke="#000" stroke-width="1" />
<line x1="361.0" y1="251.5" x2="361.0" y2="257.5" stroke="#000" stroke-width="1" />
<rect x="347.5" y="245.5" width="16.5" height="13" stroke="#ff8a20" fill="none" stroke-width="1"/>
<rect x="339.0" y="246.5" width="8.5" height="11.5" stroke="#ff8a20" fill="none" stroke-width="1"/>
<rect x="339.0" y="250" width="5" height="5" stroke="#f08c3c" fill="none" stroke-width="1"/>
<rect x="364.0" y="246" width="5" height="12.5" fill="#ff8a20" stroke="none"/>
<rect x="369.0" y="246.5" width="3.5" height="11.5" stroke="#ff8a20" fill="none" stroke-width="1"/>
<line x1="336.5" y1="252.5" x2="375.5" y2="252.5" stroke="#f08c3c" stroke-width="1" />
<line x1="355.5" y1="236" x2="355.5" y2="261" stroke="#d07030" stroke-width="1" stroke-dasharray="4 1"/>
<polyline points="526.5,240 547.0,240 545.0,244.5 528.5,244.5" stroke="#ff8a20" stroke-width="1" fill="none"/>
<rect x="529.5" y="241" width="14" height="2" fill="#ffa030" stroke="none"/>
<line x1="532.5" y1="236.5" x2="532.5" y2="240" stroke="#ff8a20" stroke-width="1" />
<line x1="536.5" y1="236.5" x2="536.5" y2="240" stroke="#ff8a20" stroke-width="1" />
<line x1="540.5" y1="236.5" x2="540.5" y2="240" stroke="#ff8a20" stroke-width="1" />
<rect x="528.5" y="246" width="16.5" height="12.5" fill="#ff8a20" stroke="none"/>
<rect x="530.0" y="247.5" width="6" height="3" fill="#000" stroke="none"/>
<rect x="537.0" y="247.5" width="6.5" height="3" fill="#000" stroke="none"/>
<line x1="531.0" y1="251.5" x2="531.0" y2="257.5" stroke="#000" stroke-width="1" />
<line x1="533.0" y1="251.5" x2="533.0" y2="257.5" stroke="#000" stroke-width="1" />
<line x1="535.0" y1="251.5" x2="535.0" y2="257.5" stroke="#000" stroke-width="1" />
<line x1="538.0" y1="251.5" x2="538.0" y2="257.5" stroke="#000" stroke-width="1" />
<line x1="540.0" y1="251.5" x2="540.0" y2="257.5" stroke="#000" stroke-width="1" />
<line x1="542.0" y1="251.5" x2="542.0" y2="257.5" stroke="#000" stroke-width="1" />
<rect x="528.5" y="245.5" width="16.5" height="13" stroke="#ff8a20" fill="none" stroke-width="1"/>
<rect x="520.0" y="246.5" width="8.5" height="11.5" stroke="#ff8a20" fill="none" stroke-width="1"/>
<rect x="520.0" y="250" width="5" height="5" stroke="#f08c3c" fill="none" stroke-width="1"/>
<rect x="545.0" y="246" width="5" height="12.5" fill="#ff8a20" stroke="none"/>
<rect x="550.0" y="246.5" width="3.5" height="11.5" stroke="#ff8a20" fill="none" stroke-width="1"/>
<line x1="517.5" y1="252.5" x2="556.5" y2="252.5" stroke="#f08c3c" stroke-width="1" />
<line x1="536.5" y1="236" x2="536.5" y2="261" stroke="#d07030" stroke-width="1" stroke-dasharray="4 1"/>
<polyline points="93.5,259 96.2,282 96.6,292" stroke="#f8f080" stroke-width="1" fill="none"/>
<polyline points="108.8,259 106.2,282 105.7,292" stroke="#f8f080" stroke-width="1" fill="none"/>
<polygon points="97.0,292 105.0,292 106.5,297 103.5,304 99.5,304 95.5,297" stroke="#f8f080" stroke-width="1" fill="none"/>
<line x1="97.5" y1="298.5" x2="105.5" y2="298.5" stroke="#c03020" stroke-width="1" />
<line x1="101.0" y1="294" x2="101.0" y2="303" stroke="#c03020" stroke-width="1" />
<polygon points="93.0,319 93.0,309 95.5,306.5 103.0,306.5 105.0,309 105.0,319" stroke="#ffff30" stroke-width="1" fill="#ffff30"/>
<rect x="98.5" y="319" width="6" height="23" fill="#ffff30" stroke="none"/>
<rect x="92.5" y="310" width="6" height="1.5" fill="#e04030" stroke="none"/>
<rect x="92.5" y="313" width="7" height="1.5" fill="#c03020" stroke="none"/>
<rect x="94.5" y="316" width="3" height="2" fill="#fff8c0" stroke="none"/>
<rect x="100.5" y="321" width="2" height="4" fill="#b02020" stroke="none"/>
<rect x="100.5" y="328" width="2" height="8" fill="#b02020" stroke="none"/>
<rect x="106.0" y="323.5" width="6" height="7" stroke="#f8f080" fill="none" stroke-width="1"/>
<line x1="101.0" y1="342" x2="101.0" y2="368" stroke="#c02828" stroke-width="1" />
<rect x="100.0" y="353" width="3" height="2" fill="#ffff30" stroke="none"/>
<rect x="100.0" y="355" width="3" height="5" fill="#d040a0" stroke="none"/>
<rect x="98.5" y="360" width="6" height="4" fill="#ffff30" stroke="none"/>
<polyline points="274.5,259 277.2,282 277.6,292" stroke="#f8f080" stroke-width="1" fill="none"/>
<polyline points="289.8,259 287.2,282 286.7,292" stroke="#f8f080" stroke-width="1" fill="none"/>
<polygon points="278.0,292 286.0,292 287.5,297 284.5,304 280.5,304 276.5,297" stroke="#f8f080" stroke-width="1" fill="none"/>
<line x1="278.5" y1="298.5" x2="286.5" y2="298.5" stroke="#c03020" stroke-width="1" />
<line x1="282.0" y1="294" x2="282.0" y2="303" stroke="#c03020" stroke-width="1" />
<polygon points="274.0,319 274.0,309 276.5,306.5 284.0,306.5 286.0,309 286.0,319" stroke="#ffff30" stroke-width="1" fill="#ffff30"/>
<rect x="279.5" y="319" width="6" height="23" fill="#ffff30" stroke="none"/>
<rect x="273.5" y="310" width="6" height="1.5" fill="#e04030" stroke="none"/>
<rect x="273.5" y="313" width="7" height="1.5" fill="#c03020" stroke="none"/>
<rect x="275.5" y="316" width="3" height="2" fill="#fff8c0" stroke="none"/>
<rect x="281.5" y="321" width="2" height="4" fill="#b02020" stroke="none"/>
<rect x="281.5" y="328" width="2" height="8" fill="#b02020" stroke="none"/>
<rect x="287.0" y="323.5" width="6" height="7" stroke="#f8f080" fill="none" stroke-width="1"/>
<line x1="282.0" y1="342" x2="282.0" y2="368" stroke="#c02828" stroke-width="1" />
<rect x="281.0" y="353" width="3" height="2" fill="#ffff30" stroke="none"/>
<rect x="281.0" y="355" width="3" height="5" fill="#d040a0" stroke="none"/>
<rect x="279.5" y="360" width="6" height="4" fill="#ffff30" stroke="none"/>
<polyline points="346.0,259 351.0,277" stroke="#ff8a20" stroke-width="1" fill="none"/>
<polyline points="364.0,259 360.0,277" stroke="#ff8a20" stroke-width="1" fill="none"/>
<circle cx="355.5" cy="281.5" r="5" stroke="#ff8a20" fill="none"/>
<line x1="349.5" y1="281.5" x2="361.5" y2="281.5" stroke="#ff8a20" stroke-width="1" />
<rect x="354.5" y="286" width="2" height="4" fill="#ff8a20" stroke="none"/>
<polygon points="347.0,290 357.0,290 357.0,326 352.5,326 352.5,303.5 347.0,303.5" stroke="#ff3a12" stroke-width="1" fill="#ff3a12"/>
<rect x="349.5" y="292" width="5" height="1" fill="#ff9060" stroke="none"/>
<rect x="349.5" y="296" width="5" height="1" fill="#ff9060" stroke="none"/>
<rect x="353.5" y="310" width="2" height="1" fill="#ff9060" stroke="none"/>
<rect x="358.0" y="307.5" width="6.5" height="7" stroke="#c06040" fill="none" stroke-width="1"/>
<line x1="354.5" y1="326" x2="354.5" y2="347" stroke="#c02020" stroke-width="1" />
<rect x="353.0" y="347" width="4" height="12" fill="#30d030" stroke="none"/>
<rect x="353.5" y="358" width="3" height="2" fill="#ffff30" stroke="none"/>
<polyline points="527.0,259 532.0,277" stroke="#ff8a20" stroke-width="1" fill="none"/>
<polyline points="545.0,259 541.0,277" stroke="#ff8a20" stroke-width="1" fill="none"/>
<circle cx="536.5" cy="281.5" r="5" stroke="#ff8a20" fill="none"/>
<line x1="530.5" y1="281.5" x2="542.5" y2="281.5" stroke="#ff8a20" stroke-width="1" />
<rect x="535.5" y="286" width="2" height="4" fill="#ff8a20" stroke="none"/>
<polygon points="528.0,290 538.0,290 538.0,326 533.5,326 533.5,303.5 528.0,303.5" stroke="#ff3a12" stroke-width="1" fill="#ff3a12"/>
<rect x="530.5" y="292" width="5" height="1" fill="#ff9060" stroke="none"/>
<rect x="530.5" y="296" width="5" height="1" fill="#ff9060" stroke="none"/>
<rect x="534.5" y="310" width="2" height="1" fill="#ff9060" stroke="none"/>
<rect x="539.0" y="307.5" width="6.5" height="7" stroke="#c06040" fill="none" stroke-width="1"/>
<line x1="535.5" y1="326" x2="535.5" y2="347" stroke="#c02020" stroke-width="1" />
<rect x="534.0" y="347" width="4" height="12" fill="#30d030" stroke="none"/>
<rect x="534.5" y="358" width="3" height="2" fill="#ffff30" stroke="none"/>
<polyline points="95.5,368.5 288.5,368.5" stroke="#f08c3c" stroke-width="1" fill="none"/>
<polyline points="95.5,374.5 288.5,374.5" stroke="#f08c3c" stroke-width="1" fill="none"/>
<rect x="157.5" y="374.5" width="3" height="3" stroke="#f08c3c" fill="none" stroke-width="1"/>
<rect x="223.5" y="374.5" width="3" height="3" stroke="#f08c3c" fill="none" stroke-width="1"/>
<line x1="187.5" y1="346" x2="187.5" y2="386" stroke="#d02a1a" stroke-width="1" />
<rect x="348.5" y="352.5" width="192" height="6" stroke="#f08c3c" fill="none" stroke-width="1"/>
<rect x="410.5" y="358.5" width="3" height="3" stroke="#f08c3c" fill="none" stroke-width="1"/>
<rect x="476.5" y="358.5" width="3" height="3" stroke="#f08c3c" fill="none" stroke-width="1"/>
<line x1="672.5" y1="194" x2="672.5" y2="213" stroke="#ffffff" stroke-width="1" />
<line x1="783.5" y1="194" x2="783.5" y2="213" stroke="#ffffff" stroke-width="1" />
<line x1="672.5" y1="198.5" x2="783.5" y2="198.5" stroke="#ffffff" stroke-width="1" />
<text x="722" y="198" fill="#ffffff" stroke="#ffffff" stroke-width="0.35" font-family="Liberation Sans, sans-serif" font-weight="bold" font-size="8" textLength="13" lengthAdjust="spacingAndGlyphs">4600</text>
<line x1="668.5" y1="212.5" x2="787.5" y2="212.5" stroke="#f2ee9a" stroke-width="1" />
<line x1="668.5" y1="223.5" x2="787.5" y2="223.5" stroke="#f2ee9a" stroke-width="1" />
<line x1="668.5" y1="212" x2="668.5" y2="393" stroke="#f2ee9a" stroke-width="1" />
<line x1="676.5" y1="212" x2="676.5" y2="393" stroke="#f2ee9a" stroke-width="1" />
<line x1="779.5" y1="212" x2="779.5" y2="393" stroke="#f2ee9a" stroke-width="1" />
<line x1="787.5" y1="212" x2="787.5" y2="393" stroke="#f2ee9a" stroke-width="1" />
<line x1="672.5" y1="214" x2="672.5" y2="398" stroke="#781818" stroke-width="1.6" stroke-dasharray="10 2"/>
<line x1="783.5" y1="214" x2="783.5" y2="398" stroke="#781818" stroke-width="1.6" stroke-dasharray="10 2"/>
<line x1="668.5" y1="386" x2="665" y2="393.5" stroke="#f2ee9a" stroke-width="1" />
<line x1="676.5" y1="386" x2="680" y2="393.5" stroke="#ffffff" stroke-width="1" />
<line x1="779.5" y1="386" x2="776" y2="393.5" stroke="#f2ee9a" stroke-width="1" />
<line x1="787.5" y1="386" x2="791" y2="393.5" stroke="#ffffff" stroke-width="1" />
<rect x="666" y="221.5" width="11" height="3.5" fill="#ffff30" stroke="none"/>
<rect x="667" y="218" width="3" height="10" fill="#ffff30" stroke="none"/>
<line x1="671.5" y1="214" x2="671.5" y2="232" stroke="#e0a040" stroke-width="1" />
<line x1="674.5" y1="214" x2="674.5" y2="232" stroke="#e0a040" stroke-width="1" />
<rect x="779" y="221.5" width="11" height="3.5" fill="#ffff30" stroke="none"/>
<rect x="786" y="218" width="3" height="10" fill="#ffff30" stroke="none"/>
<line x1="782.5" y1="214" x2="782.5" y2="232" stroke="#e0a040" stroke-width="1" />
<line x1="785.5" y1="214" x2="785.5" y2="232" stroke="#e0a040" stroke-width="1" />
<line x1="657" y1="393.5" x2="832" y2="393.5" stroke="#ffffff" stroke-width="1" />
<line x1="789" y1="212.5" x2="815" y2="212.5" stroke="#ffffff" stroke-width="1" />
<line x1="791" y1="223.5" x2="805" y2="223.5" stroke="#ffffff" stroke-width="1" />
<line x1="811.5" y1="213" x2="811.5" y2="393" stroke="#ffffff" stroke-width="1" />
<text x="802.5" y="223" fill="#ffffff" stroke="#ffffff" stroke-width="0.35" font-family="Liberation Sans, sans-serif" font-weight="bold" font-size="10" textLength="10" lengthAdjust="spacingAndGlyphs" transform="rotate(-90 802.5 223)">450</text>
<text x="810" y="310" fill="#ffffff" stroke="#ffffff" stroke-width="0.35" font-family="Liberation Sans, sans-serif" font-weight="bold" font-size="8" textLength="13" lengthAdjust="spacingAndGlyphs" transform="rotate(-90 810 310)">7200</text>
<rect x="676.5" y="253" width="34" height="23.5" stroke="#f2ee9a" fill="none" stroke-width="1"/>
<line x1="676.5" y1="273.5" x2="710.5" y2="273.5" stroke="#f0f0c0" stroke-width="1" />
<line x1="707.5" y1="253" x2="707.5" y2="276" stroke="#f2ee9a" stroke-width="1" />
<line x1="697" y1="253" x2="697" y2="273.5" stroke="#ffff30" stroke-width="2" />
<rect x="745.5" y="253" width="34" height="23.5" stroke="#f2ee9a" fill="none" stroke-width="1"/>
<line x1="745.5" y1="273.5" x2="779.5" y2="273.5" stroke="#f0f0c0" stroke-width="1" />
<line x1="748.5" y1="253" x2="748.5" y2="276" stroke="#f2ee9a" stroke-width="1" />
<line x1="760" y1="253" x2="760" y2="273.5" stroke="#ffff30" stroke-width="2" />
<polyline points="718,213 738.5,213 738.5,222 728.5,238 718,222 718,213" stroke="#f2ee9a" stroke-width="1" fill="none"/>
<line x1="723.5" y1="214" x2="723.5" y2="223" stroke="#f2ee9a" stroke-width="1" />
<line x1="733.5" y1="214" x2="733.5" y2="223" stroke="#f2ee9a" stroke-width="1" />
<line x1="728.5" y1="207" x2="728.5" y2="240" stroke="#8a2020" stroke-width="1.5" />
<rect x="719" y="240" width="14" height="4" fill="#f0c040" stroke="none"/>
<rect x="723" y="244" width="10" height="7" fill="#ffff30" stroke="none"/>
<ellipse cx="727.5" cy="253.5" rx="7.5" ry="4" fill="#ffe060" stroke="#f8f080"/>
<line x1="717" y1="252.5" x2="738" y2="252.5" stroke="#f08c3c" stroke-width="1" />
<line x1="727.5" y1="258" x2="728" y2="294" stroke="#f2ee9a" stroke-width="1" />
<line x1="730" y1="258" x2="730.5" y2="294" stroke="#f2ee9a" stroke-width="1" />
<rect x="726" y="294" width="4" height="10" fill="#ffff30" stroke="none"/>
<rect x="723" y="304" width="10" height="10" fill="#ff30c0" stroke="none"/>
<rect x="733" y="306.5" width="7" height="3.5" fill="#ffff30" stroke="none"/>
<polygon points="723,313 733,313 741,327 735,322 729,329 722,322 716,327" stroke="#ff30c0" stroke-width="1" fill="#ff30c0"/>
<line x1="728.5" y1="326" x2="728.5" y2="335" stroke="#d020a0" stroke-width="2" />
<rect x="721" y="306" width="2" height="3" fill="#f08c3c" stroke="none"/>
<rect x="733" y="304" width="2" height="2" fill="#f08c3c" stroke="none"/>
<polyline points="724,311 716,322" stroke="#f08c3c" stroke-width="2" fill="none"/>
<polyline points="732,311 741,322" stroke="#f08c3c" stroke-width="2" fill="none"/>
<polyline points="716,325 728,338 740,325" stroke="#f8f0a0" stroke-width="1" fill="none"/>
<line x1="716.5" y1="322" x2="716.5" y2="375" stroke="#f08c3c" stroke-width="2" />
<line x1="739.5" y1="322" x2="739.5" y2="375" stroke="#f08c3c" stroke-width="2" />
<line x1="718" y1="368.5" x2="738" y2="368.5" stroke="#f08c3c" stroke-width="1" />
<rect x="712.5" y="375.5" width="31" height="2.5" stroke="#f08c3c" fill="none" stroke-width="1"/>
<rect x="734.5" y="334.5" width="5.5" height="6.5" stroke="#40d8f0" fill="#1a6a80" stroke-width="1"/>
<rect x="737.5" y="354" width="2" height="8" fill="#ffff30" stroke="none"/>
<rect x="735.5" y="358" width="6" height="2" fill="#ffff30" stroke="none"/>
<rect x="737" y="355" width="4" height="1.5" fill="#ffff30" stroke="none"/>
<rect x="717.5" y="379.5" width="20" height="2.5" stroke="#30d030" fill="none" stroke-width="1"/>
<rect x="720.5" y="382.5" width="15" height="10" stroke="#30d030" fill="none" stroke-width="1"/>
<line x1="728" y1="376" x2="728" y2="400" stroke="#b02020" stroke-width="1" stroke-dasharray="6 2"/>

<!--/DRAW-->
</g>
</svg>
</div></body></html>
